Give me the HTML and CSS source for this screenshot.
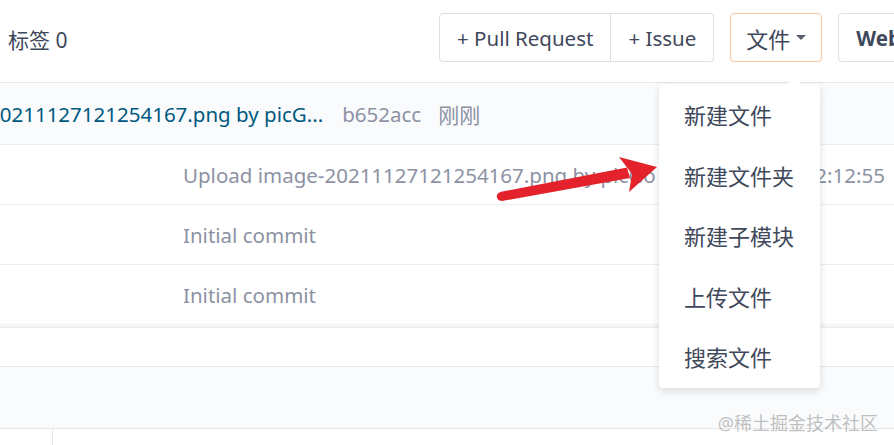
FILE: index.html
```html
<!DOCTYPE html>
<html>
	<head>
		<meta charset="UTF-8">
		<title>仓库文件</title>
		<link rel="stylesheet" href="styles.css">
	</head>
	<body>
		<div class="page">
			<div class="toolbar">
				<span class="tags">标签 0</span>
				<div class="actions">
					<div class="btn-group">
						<a class="btn">+ Pull Request</a>
						<a class="btn">+ Issue</a>
					</div>
					<a class="btn btn-file">文件 <i class="caret"></i></a>
					<a class="btn btn-web">Web</a>
				</div>
			</div>

			<div class="tree">
				<div class="row row-head">
					<a class="commit-link">20211127121254167.png by picG...</a>
					<span class="sha">b652acc</span>
					<span class="when">刚刚</span>
				</div>
				<div class="row">
					<span class="msg">Upload image-20211127121254167.png by picGo</span>
					<span class="time">12:12:55</span>
				</div>
				<div class="row">
					<span class="msg">Initial commit</span>
				</div>
				<div class="row">
					<span class="msg">Initial commit</span>
				</div>
			</div>

			<div class="blank"></div>
			<div class="readme-head"></div>
			<div class="readme-body">
				<div class="readme-side"></div>
			</div>

			<!-- 下拉菜单 -->
			<ul class="dropdown">
				<li>新建文件</li>
				<li>新建文件夹</li>
				<li>新建子模块</li>
				<li>上传文件</li>
				<li>搜索文件</li>
			</ul>

			<!-- 红色标注箭头 -->
			<svg class="arrow" width="894" height="445" viewBox="0 0 894 445">
				<polygon points="500,192 627,167.5 630,178 502,201" fill="#e3222b"/>
				<circle cx="501" cy="196.5" r="4.2" fill="#e3222b"/>
				<polygon points="619,157 657,167 629,192 632,174" fill="#e3222b"/>
			</svg>

			<div class="watermark">@稀土掘金技术社区</div>
		</div>
	</body>
</html>
```

FILE: styles.css
```css
*{
	margin: 0;
	padding: 0;
	list-style: none;
	box-sizing: border-box;
}
body{
	font-family: "Noto Sans", "Noto Sans CJK SC", sans-serif;
	font-size: 20.5px;
	color: #40485b;
	background-color: #fff;
	overflow: hidden;
}
.page{
	width: 894px;
	height: 445px;
	position: relative;
	overflow: hidden;
}
a{
	text-decoration: none;
	color: inherit;
}
/* 顶部工具栏 */
.toolbar{
	height: 83px;
	display: flex;
	align-items: flex-start;
	padding-left: 8px;
	border-bottom: 1px solid #e5e7ea;
}
.tags{
	width: 431px;
	flex: none;
	font-size: 21px;
	margin-top: 24px;
}
.actions{
	display: flex;
	gap: 16px;
	flex: none;
	margin-top: 13px;
}
.btn-group{
	display: flex;
}
.btn{
	display: flex;
	align-items: center;
	height: 49px;
	padding: 0 17px;
	border: 1px solid #dcdfe3;
	border-radius: 4px;
	background-color: #fff;
	white-space: nowrap;
}
.btn-group .btn:first-child{
	border-radius: 4px 0 0 4px;
}
.btn-group .btn:last-child{
	border-radius: 0 4px 4px 0;
	border-left: none;
}
.btn-file{
	border-color: #f2c79d;
	padding: 0 15px;
	font-size: 22px;
}
.caret{
	display: inline-block;
	margin-left: 6px;
	border-left: 5px solid transparent;
	border-right: 5px solid transparent;
	border-top: 5px solid #5a6070;
}
.btn-web{
	font-weight: bold;
	padding-right: 40px;
}
/* 文件列表 */
.row{
	height: 60px;
	display: flex;
	align-items: center;
	border-bottom: 1px solid #eceef0;
	padding-left: 183px;
	padding-right: 9px;
	color: #8c92a4;
	white-space: nowrap;
}
.row-head{
	height: 62px;
	background-color: #fafbfc;
	padding-left: 0;
}
.commit-link{
	color: #005980;
	margin-left: -12px;
}
.sha{
	margin-left: 19px;
}
.when{
	margin-left: 17px;
	font-size: 21px;
}
.time{
	margin-left: auto;
}
.blank{
	height: 40px;
	border-top: 2px solid #eceef0;
	margin-top: 1px;
}
.readme-head{
	height: 63px;
	background-color: #fafbfc;
	border-top: 1px solid #e3e5e8;
	border-bottom: 1px solid #e3e5e8;
}
.readme-body{
	height: 40px;
}
.readme-side{
	width: 53px;
	height: 100%;
	border-right: 1px solid #e3e5e8;
}
/* 下拉菜单 */
.dropdown{
	position: absolute;
	left: 659px;
	top: 84px;
	width: 161px;
	padding-top: 1px;
	background-color: #fff;
	border-radius: 4px;
	box-shadow: 0 3px 9px rgba(0, 0, 0, 0.13);
}
.dropdown:before{
	content: "";
	position: absolute;
	top: -7px;
	left: 128px;
	border-left: 7px solid transparent;
	border-right: 7px solid transparent;
	border-bottom: 7px solid #fff;
}
.dropdown li{
	height: 60.5px;
	line-height: 60px;
	padding-left: 25px;
	font-size: 22px;
	color: #40485b;
}
.arrow{
	position: absolute;
	left: 0;
	top: 0;
	pointer-events: none;
}
.watermark{
	position: absolute;
	right: 16px;
	bottom: 10px;
	font-size: 18px;
	color: rgba(150, 150, 150, 0.6);
}
```
